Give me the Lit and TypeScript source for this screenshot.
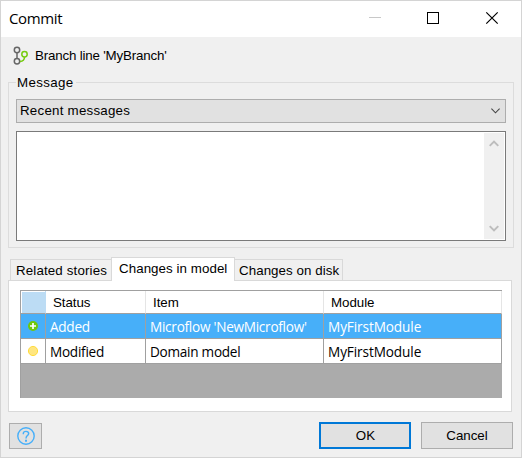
import { LitElement, html, css, svg } from "lit";
import { customElement, property } from "lit/decorators.js";

interface Change {
  kind: "added" | "modified";
  status: string;
  item: string;
  module: string;
}

const CHANGES: Change[] = [
  { kind: "added", status: "Added", item: "Microflow 'NewMicroflow'", module: "MyFirstModule" },
  { kind: "modified", status: "Modified", item: "Domain model", module: "MyFirstModule" },
];

@customElement("changes-grid")
class ChangesGrid extends LitElement {
  @property({ attribute: false }) rows: Change[] = [];

  static styles = css`
    :host { display: block; box-sizing: border-box; height: 108px; background: #ababab; border-left: 1px solid #a0a0a0; border-top: 1px solid #a0a0a0; }
    .row { display: grid; grid-template: 25px / 25px 100px 178px 178px; }
    .cell { box-sizing: border-box; border-right: 1px solid #a0a0a0; border-bottom: 1px solid #a0a0a0; background: #fff; padding-left: 4px; white-space: nowrap; font: 13.6px/26px "Open Sans", "Noto Sans", sans-serif; letter-spacing: -0.27px; }
    .module { letter-spacing: -0.1px; }
    .head { grid-template-rows: 23px; }
    .head .cell { font: 13.33px/24px "Liberation Sans", Arial, sans-serif; letter-spacing: -0.05px; border-right-color: #e5e5e5; padding-left: 7px; }
    .head .corner { background: #bcdcf4; border-right-color: #bcdcf4; box-shadow: inset 1px 1px #fff; }
    .mark { padding: 0 0 1px; display: flex; align-items: center; justify-content: center; }
    .selected .cell { background: #47aff9; color: #fff; }
    svg { display: block; }
  `;

  private mark(kind: string) {
    return kind === "added"
      ? svg`<circle cx="6" cy="6" r="5" fill="#6fc80a"/><path d="M6 3v6M3 6h6" stroke="#fff" stroke-width="1.7"/>`
      : svg`<circle cx="6" cy="6" r="4.6" fill="#ffe680" stroke="#ffdc3c"/>`;
  }

  render() {
    return html`
      <div class="row head">
        <div class="cell corner"></div><div class="cell">Status</div><div class="cell">Item</div><div class="cell">Module</div>
      </div>
      ${this.rows.map((r, i) => html`
        <div class="row ${i === 0 ? "selected" : ""}">
          <div class="cell mark"><svg width="12" height="12">${this.mark(r.kind)}</svg></div>
          <div class="cell">${r.status}</div><div class="cell">${r.item}</div><div class="cell module">${r.module}</div>
        </div>`)}
    `;
  }
}

@customElement("app-root")
class AppRoot extends LitElement {
  static styles = css`
    :host { display: block; width: 522px; height: 458px; color: #000; font: 13.33px/16px "Liberation Sans", Arial, sans-serif; }
    * { box-sizing: border-box; }
    svg { display: block; }
    .window { height: 458px; border: 1px solid #d4d4d4; background: #f0f0f0; display: flex; flex-direction: column; padding: 0 8px 8px 7px; }
    .title { height: 36px; flex: none; background: #fff; margin: 0 -8px 0 -7px; padding-left: 8px; display: flex; align-items: center; justify-content: space-between; }
    .caption { font: 15px/20px "Open Sans", "Noto Sans", sans-serif; letter-spacing: -0.35px; padding-bottom: 2px; }
    .branch { height: 41px; flex: none; display: flex; align-items: center; gap: 6px; padding: 0 0 4px 5px; letter-spacing: -0.18px; }
    .group { margin: -4px 0 0; min-width: 0; height: 174px; flex: none; border: 1px solid #dcdcdc; padding: 0 7px; width: 506px; }
    .group legend { padding: 0 2px 0 1px; height: 16px; line-height: 18px; letter-spacing: 0.35px; }
    .combo { margin-top: 9px; height: 24px; border: 1px solid #adadad; background: #e1e1e1; display: flex; align-items: center; justify-content: space-between; padding: 0 5px 0 3px; letter-spacing: 0.23px; }
    .message { margin-top: 8px; height: 110px; border: 1px solid #7a7a7a; background: #fff; display: flex; justify-content: flex-end; padding: 1px; }
    .scroll { width: 20px; background: #f0f0f0; display: flex; flex-direction: column; justify-content: space-between; align-items: center; padding: 7px 0; }
    .tabs { display: flex; align-items: flex-end; margin-top: 9px; padding-left: 2px; height: 23px; flex: none; letter-spacing: 0.06px; }
    .tab { height: 21px; border: 1px solid #d9d9d9; border-bottom: 0; white-space: nowrap; line-height: 21px; padding-left: 5px; }
    .related { width: 102px; border-right: 0; letter-spacing: 0.14px; }
    .model { width: 124px; height: 24px; margin: 0 0 -1px -1px; background: #fff; line-height: 22px; padding-left: 7px; z-index: 1; }
    .disk { width: 108px; border-left: 0; padding-left: 4px; }
    .panel { height: 132px; flex: none; width: 504px; border: 1px solid #d9d9d9; background: #fff; padding: 9px 9px 0 11px; }
    .actions { display: flex; margin-top: 10px; padding-left: 1px; align-items: flex-end; }
    .button { width: 92px; height: 27px; border: 1px solid #adadad; background: #e1e1e1; display: flex; align-items: center; justify-content: center; }
    .help { width: 33px; height: 26px; margin-right: auto; }
    .ok { border: 2px solid #0078d7; margin-right: 10px; padding-left: 1px; }
  `;

  render() {
    return html`
      <div class="window">
        <div class="title">
          <span class="caption">Commit</span>
          <svg width="152" height="36" fill="none">
            <path d="M0 16.5h12" stroke="#c8c8c8"/>
            <rect x="58.5" y="11.5" width="11" height="11" stroke="#000" shape-rendering="crispEdges"/>
            <path d="M117.3 11.3l11.4 11.4M128.7 11.3l-11.4 11.4" stroke="#000" stroke-width="1.2"/>
          </svg>
        </div>
        <div class="branch">
          <svg width="16" height="20" fill="none" stroke-width="1.5">
            <circle cx="4" cy="4" r="2.7" stroke="#666"/><circle cx="4" cy="15.2" r="2.7" stroke="#666"/>
            <path d="M4 6.7v6" stroke="#666"/>
            <circle cx="11.5" cy="8.2" r="2.7" stroke="#76cc12"/>
            <path d="M11.5 11c0 2.8-1.7 4.3-4.6 4.5" stroke="#76cc12"/>
          </svg>
          <span>Branch line 'MyBranch'</span>
        </div>
        <fieldset class="group">
          <legend>Message</legend>
          <div class="combo"><span>Recent messages</span>
            <svg width="9" height="6" fill="none"><path d="M.4.7L4.5 4.8L8.6.7" stroke="#444" stroke-width="1.1"/></svg>
          </div>
          <div class="message"><div class="scroll">
            <svg width="10" height="7" fill="none"><path d="M.7 5.9L5 1.6L9.3 5.9" stroke="#bdbdbd" stroke-width="2"/></svg>
            <svg width="10" height="7" fill="none"><path d="M.7 1.1L5 5.4L9.3 1.1" stroke="#bdbdbd" stroke-width="2"/></svg>
          </div></div>
        </fieldset>
        <div class="tabs">
          <div class="tab related">Related stories</div>
          <div class="tab model">Changes in model</div>
          <div class="tab disk">Changes on disk</div>
        </div>
        <div class="panel"><changes-grid .rows=${CHANGES}></changes-grid></div>
        <div class="actions">
          <div class="button help">
            <svg width="18" height="18" fill="none" stroke="#47aff9" stroke-width="1.4">
              <circle cx="9" cy="9" r="8.2"/>
              <path d="M6.3 7.2V6.5Q6.4 4.4 9 4.4T11.7 6.6Q11.7 7.8 10.3 8.7Q9 9.6 9 11.6"/><path d="M9 12.8v2" stroke-width="2"/>
            </svg>
          </div>
          <div class="button ok">OK</div>
          <div class="button">Cancel</div>
        </div>
      </div>
    `;
  }
}
